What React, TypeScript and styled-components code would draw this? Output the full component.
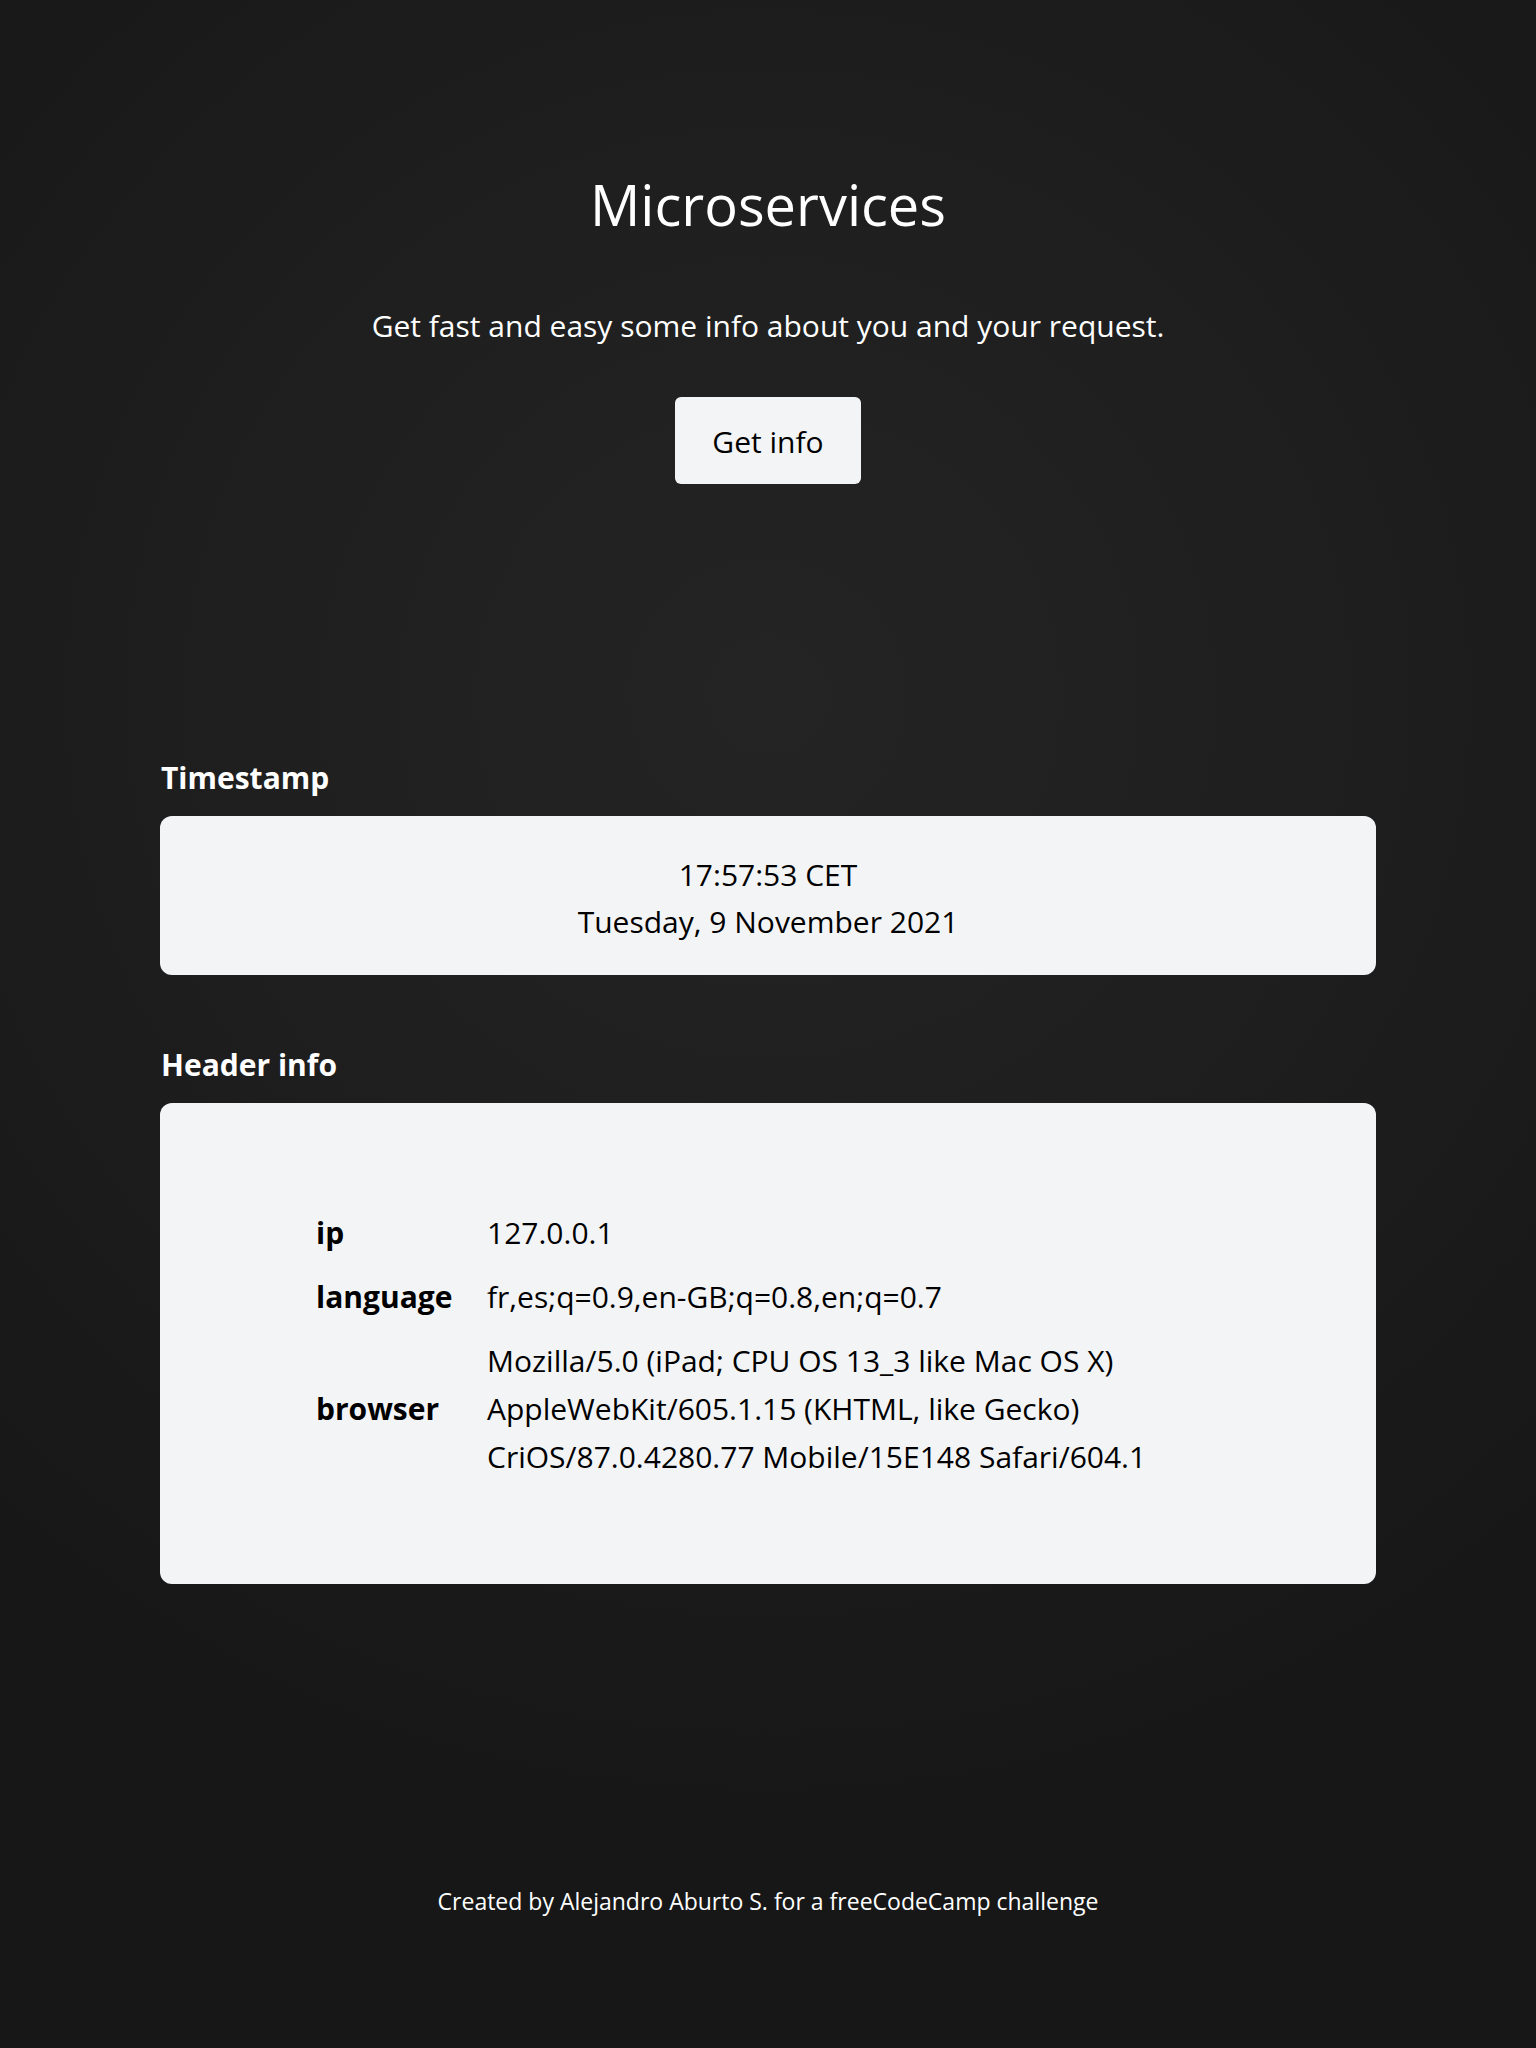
import React from "react";
import styled, { createGlobalStyle } from "styled-components";

const GlobalStyle = createGlobalStyle`
  html, body {
    margin: 0;
    padding: 0;
  }
  body {
    background: #171717;
    font-family: "Open Sans", "Noto Sans", "Liberation Sans", sans-serif;
  }
  * { box-sizing: border-box; }
`;

const Page = styled.div`
  min-height: 100vh;
  display: flex;
  flex-direction: column;
  background: radial-gradient(ellipse 75% 55% at 50% 34%, #242424 0%, #1f1f1f 45%, #171717 100%);
  color: #ffffff;
`;

const Hero = styled.header`
  display: flex;
  flex-direction: column;
  align-items: center;
  padding-top: 170px;
`;

const Title = styled.h1`
  margin: 0;
  font-size: 56px;
  line-height: 68px;
  font-weight: 400;
  color: #ffffff;
`;

const Subtitle = styled.p`
  margin: 68px 0 0;
  font-size: 30px;
  line-height: 40px;
  color: #ffffff;
`;

const InfoButton = styled.button`
  margin-top: 51px;
  padding: 25px 37px 22px;
  font-family: inherit;
  font-size: 30px;
  line-height: 40px;
  color: #000000;
  background: #f3f4f6;
  border: none;
  border-radius: 6px;
  cursor: pointer;
`;

const Main = styled.main`
  display: flex;
  flex-direction: column;
  gap: 70px;
  padding: 0 160px;
  margin-top: 274px;
`;

const Section = styled.section`
  display: flex;
  flex-direction: column;
  gap: 18px;
`;

const SectionTitle = styled.h2`
  margin: 0;
  padding-left: 1px;
  font-size: 30px;
  line-height: 40px;
  font-weight: 700;
  color: #ffffff;
`;

const Card = styled.div<{ $variant: "time" | "info" }>`
  background: #f3f4f6;
  border-radius: 12px;
  color: #000000;
  font-size: 30px;
  line-height: ${(p) => (p.$variant === "time" ? "47px" : "48px")};
  padding: ${(p) => (p.$variant === "time" ? "35px 0 30px" : "106px 0 103px 156px")};
  text-align: ${(p) => (p.$variant === "time" ? "center" : "left")};
`;

const Line = styled.div``;

const InfoGrid = styled.dl`
  margin: 0;
  display: grid;
  grid-template-columns: 171px 720px;
  row-gap: 16px;
`;

const Label = styled.dt`
  font-weight: 700;
  align-self: center;
`;

const Value = styled.dd`
  margin: 0;
`;

const Footer = styled.footer`
  margin-top: auto;
  padding-bottom: 131px;
  text-align: center;
  font-size: 23px;
  line-height: 32px;
  color: #ffffff;
`;

const rows: { label: string; value: string }[] = [
  { label: "ip", value: "127.0.0.1" },
  { label: "language", value: "fr,es;q=0.9,en-GB;q=0.8,en;q=0.7" },
  {
    label: "browser",
    value:
      "Mozilla/5.0 (iPad; CPU OS 13_3 like Mac OS X) AppleWebKit/605.1.15 (KHTML, like Gecko) CriOS/87.0.4280.77 Mobile/15E148 Safari/604.1",
  },
];

export default function App() {
  return (
    <>
      <GlobalStyle />
      <Page>
        <Hero>
          <Title>Microservices</Title>
          <Subtitle>Get fast and easy some info about you and your request.</Subtitle>
          <InfoButton type="button">Get info</InfoButton>
        </Hero>
        <Main>
          <Section>
            <SectionTitle>Timestamp</SectionTitle>
            <Card $variant="time">
              <Line>17:57:53 CET</Line>
              <Line>Tuesday, 9 November 2021</Line>
            </Card>
          </Section>
          <Section>
            <SectionTitle>Header info</SectionTitle>
            <Card $variant="info">
              <InfoGrid>
                {rows.map((r) => (
                  <React.Fragment key={r.label}>
                    <Label>{r.label}</Label>
                    <Value>{r.value}</Value>
                  </React.Fragment>
                ))}
              </InfoGrid>
            </Card>
          </Section>
        </Main>
        <Footer>Created by Alejandro Aburto S. for a freeCodeCamp challenge</Footer>
      </Page>
    </>
  );
}
